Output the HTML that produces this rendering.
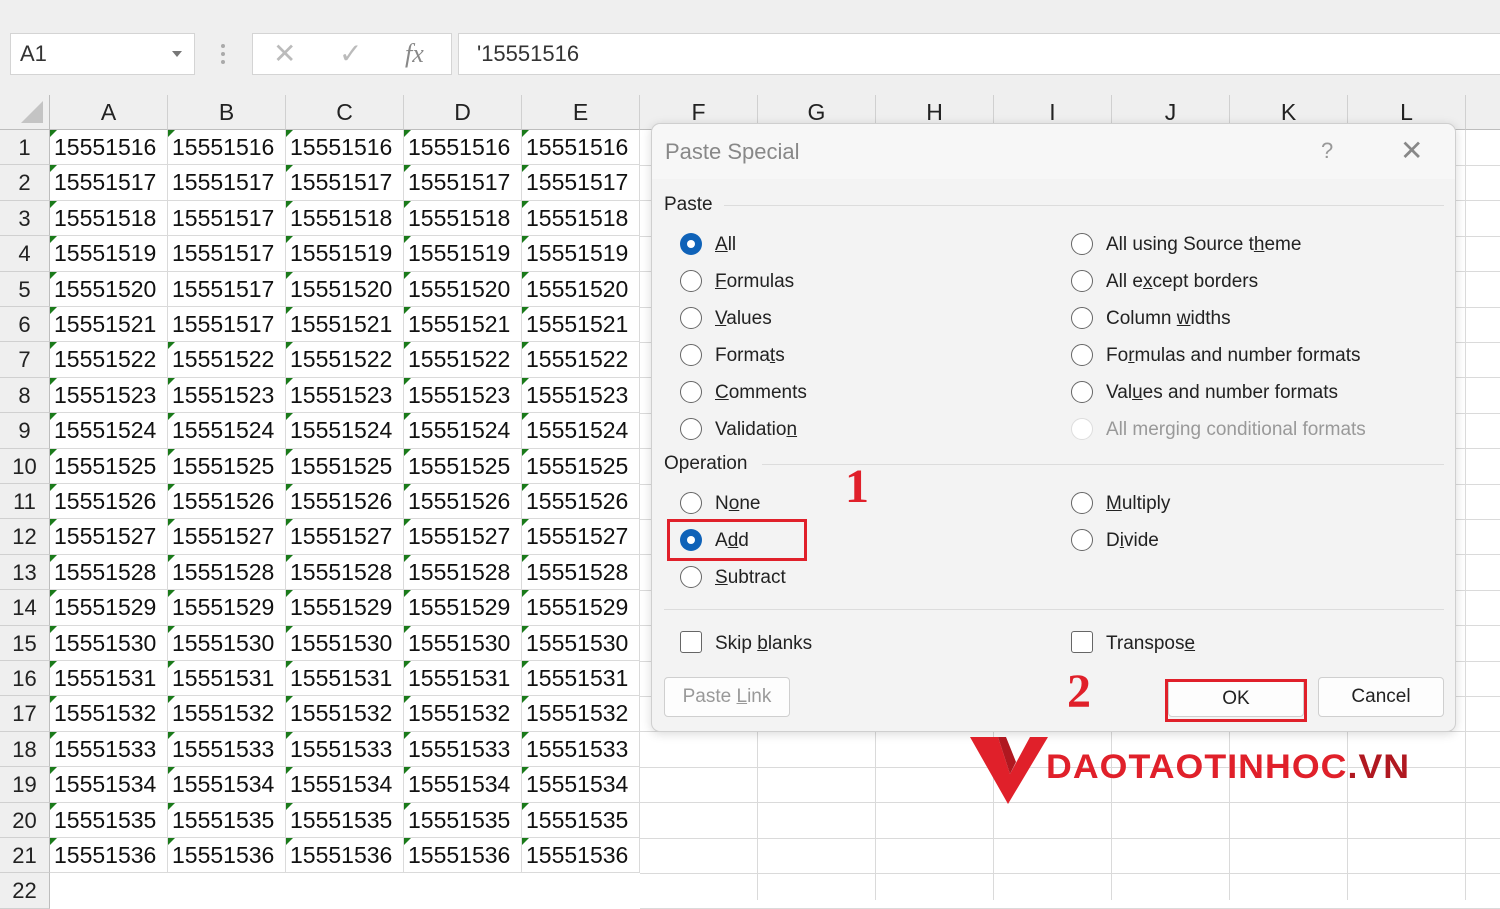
<!DOCTYPE html><html><head><meta charset="utf-8"><style>
*{margin:0;padding:0;box-sizing:border-box}
body{width:1500px;height:900px;overflow:hidden;background:#fff;font-family:"Liberation Sans",sans-serif;position:relative}
.top{position:absolute;left:0;top:0;width:1500px;height:95px;background:#efefef}
.box{position:absolute;background:#fff;border:1px solid #d4d4d4}
.hdr{position:absolute;top:95px;height:35px;background:#efefef;border-right:1px solid #d0d0d0;border-bottom:1px solid #bdbdbd;text-align:center;font-size:23px;line-height:35px;color:#222}
.rh{position:absolute;left:0;width:50px;background:#efefef;border-bottom:1px solid #d0d0d0;border-right:1px solid #bdbdbd;text-align:center;font-size:22px;color:#222}
.c{position:absolute;border-right:1px solid #dadada;border-bottom:1px solid #dadada;font-size:23px;color:#111;padding-left:4px}
.c.g::before{content:"";position:absolute;left:0;top:0;border-top:7px solid #1a7a1a;border-right:7px solid transparent}
.vl{position:absolute;width:1px;background:#dadada}
.hl{position:absolute;height:1px;background:#dadada}
.dlg{position:absolute;left:651px;top:123px;width:805px;height:609px;background:#f3f3f3;border:1px solid #cfcfcf;border-radius:9px;box-shadow:0 2px 10px rgba(0,0,0,.15);font-family:"Liberation Sans Narrow","Liberation Sans",sans-serif;font-size:19px;color:#222}
.t{position:absolute}
.r{position:absolute;width:22px;height:22px;border:1.5px solid #666;border-radius:50%;background:#fff}
.r.on{border:none;background:#0f62b8}
.r.on::after{content:"";position:absolute;left:7px;top:7px;width:8px;height:8px;border-radius:50%;background:#fff}
.sep{position:absolute;height:1px;background:#dcdcdc}
.btn{position:absolute;background:#fdfdfd;border:1px solid #cfcfcf;border-radius:4px;text-align:center;line-height:38px}
</style></head><body>
<div class="top"></div>
<div class="box" style="left:10px;top:33px;width:185px;height:42px;font-size:22px;line-height:40px;padding-left:9px;color:#333">A1<span style="position:absolute;right:12px;top:17px;border-top:6px solid #777;border-left:5px solid transparent;border-right:5px solid transparent"></span></div>
<div style="position:absolute;left:221px;top:44px;width:4px;height:20px;border-left:4px dotted #aaa"></div>
<div class="box" style="left:252px;top:33px;width:200px;height:42px;color:#bbb;font-size:28px;line-height:40px">
<span style="position:absolute;left:20px">✕</span><span style="position:absolute;left:86px">✓</span><span style="position:absolute;left:152px;font-family:'Liberation Serif',serif;font-style:italic;color:#888;font-size:26px">fx</span></div>
<div class="box" style="left:458px;top:33px;width:1050px;height:42px;font-size:22px;line-height:40px;padding-left:18px;color:#333">'15551516</div>
<div style="position:absolute;left:0;top:95px;width:50px;height:35px;background:#efefef;border-right:1px solid #bdbdbd;border-bottom:1px solid #bdbdbd"><div style="position:absolute;right:6px;bottom:6px;border-bottom:22px solid #c4c4c4;border-left:22px solid transparent"></div></div>
<div id="g"></div>
<script>
var L="ABCDEFGHIJKL",h="";
for(var i=0;i<12;i++){h+='<div class="hdr" style="left:'+(50+i*118)+'px;width:118px">'+L[i]+'</div>';}
h+='<div class="hdr" style="left:1466px;width:40px"></div>';
for(var r=1;r<=22;r++){var y=130+(r-1)*35.4;
h+='<div class="rh" style="top:'+y+'px;height:35.4px;line-height:35px">'+r+'</div>';
if(r<=21){for(var c=0;c<5;c++){var v=15551515+r;if(c==1&&r>=2&&r<=6)v=15551517;
h+='<div class="c'+((c==1&&r>=2&&r<=6)?'':' g')+'" style="left:'+(50+c*118)+'px;top:'+y+'px;width:118px;height:35.4px;line-height:35px">'+v+'</div>';}}
h+='<div class="hl" style="left:640px;width:860px;top:'+(y+35)+'px"></div>';}
for(var i=5;i<13;i++)h+='<div class="vl" style="left:'+(50+i*118+117)+'px;top:130px;height:770px"></div>';
document.getElementById('g').innerHTML=h;
</script>
<div class="dlg">
<div style="position:absolute;left:0;top:0;width:100%;height:55px;background:#f7f7f7;border-radius:9px 9px 0 0"></div>
<div class="t" style="left:13px;top:15px;font-size:22px;color:#888">Paste Special</div>
<div class="t" style="left:669px;top:14px;font-size:22px;color:#999">?</div>
<div class="t" style="left:748px;top:10px;font-size:28px;color:#888">✕</div>
<div class="t" style="left:12px;top:70px">Paste</div><div class="sep" style="left:72px;width:720px;top:81px"></div>
<div class="r on" style="left:28px;top:109px"></div><div class="t" style="left:63px;top:110px"><u>A</u>ll</div>
<div class="r" style="left:28px;top:146px"></div><div class="t" style="left:63px;top:147px"><u>F</u>ormulas</div>
<div class="r" style="left:28px;top:183px"></div><div class="t" style="left:63px;top:184px"><u>V</u>alues</div>
<div class="r" style="left:28px;top:220px"></div><div class="t" style="left:63px;top:221px">Forma<u>t</u>s</div>
<div class="r" style="left:28px;top:257px"></div><div class="t" style="left:63px;top:258px"><u>C</u>omments</div>
<div class="r" style="left:28px;top:294px"></div><div class="t" style="left:63px;top:295px">Validatio<u>n</u></div>
<div class="r" style="left:419px;top:109px"></div><div class="t" style="left:454px;top:110px">All using Source t<u>h</u>eme</div>
<div class="r" style="left:419px;top:146px"></div><div class="t" style="left:454px;top:147px">All e<u>x</u>cept borders</div>
<div class="r" style="left:419px;top:183px"></div><div class="t" style="left:454px;top:184px">Column <u>w</u>idths</div>
<div class="r" style="left:419px;top:220px"></div><div class="t" style="left:454px;top:221px">Fo<u>r</u>mulas and number formats</div>
<div class="r" style="left:419px;top:257px"></div><div class="t" style="left:454px;top:258px">Val<u>u</u>es and number formats</div>
<div class="r" style="left:419px;top:294px;border-color:#ddd"></div><div class="t" style="left:454px;top:295px;color:#999">All mergin<u>g</u> conditional formats</div>
<div class="t" style="left:12px;top:329px">Operation</div><div class="sep" style="left:110px;width:682px;top:340px"></div>
<div class="r" style="left:28px;top:368px"></div><div class="t" style="left:63px;top:369px">N<u>o</u>ne</div>
<div class="r on" style="left:28px;top:405px"></div><div class="t" style="left:63px;top:406px">A<u>d</u>d</div>
<div class="r" style="left:28px;top:442px"></div><div class="t" style="left:63px;top:443px"><u>S</u>ubtract</div>
<div class="r" style="left:419px;top:368px"></div><div class="t" style="left:454px;top:369px"><u>M</u>ultiply</div>
<div class="r" style="left:419px;top:405px"></div><div class="t" style="left:454px;top:406px">D<u>i</u>vide</div>
<div style="position:absolute;left:15px;top:395px;width:140px;height:42px;border:3px solid #e0202a"></div>
<div class="t" style="left:193px;top:335px;font-family:'Liberation Serif',serif;font-weight:bold;font-size:48px;color:#e0202a">1</div>
<div class="sep" style="left:12px;width:780px;top:485px"></div>
<div style="position:absolute;left:28px;top:507px;width:22px;height:22px;border:1.5px solid #666;border-radius:3px;background:#fff"></div><div class="t" style="left:63px;top:509px">Skip <u>b</u>lanks</div>
<div style="position:absolute;left:419px;top:507px;width:22px;height:22px;border:1.5px solid #666;border-radius:3px;background:#fff"></div><div class="t" style="left:454px;top:509px">Transpos<u>e</u></div>
<div class="btn" style="left:12px;top:553px;width:126px;height:40px;color:#999">Paste <u>L</u>ink</div>
<div class="t" style="left:415px;top:540px;font-family:'Liberation Serif',serif;font-weight:bold;font-size:48px;color:#e0202a">2</div>
<div class="btn" style="left:516px;top:555px;width:136px;height:38px">OK</div>
<div style="position:absolute;left:513px;top:555px;width:142px;height:43px;border:3px solid #e0202a"></div>
<div class="btn" style="left:666px;top:553px;width:126px;height:40px">Cancel</div>
</div>
<svg style="position:absolute;left:968px;top:732px" width="90" height="75"><polygon points="2,5 30,5 42,42 62,5 80,5 40,72" fill="#e0202a"/><polygon points="30,5 38,5 48,30 42,42" fill="#b01820"/></svg>
<div class="t" style="left:1046px;top:748px;font-size:34px;font-weight:bold;color:#e0202a;letter-spacing:1px;transform:scaleX(1.05);transform-origin:left">DAOTAOTINHOC<span style="color:#b01820">.VN</span></div>
</body></html>
